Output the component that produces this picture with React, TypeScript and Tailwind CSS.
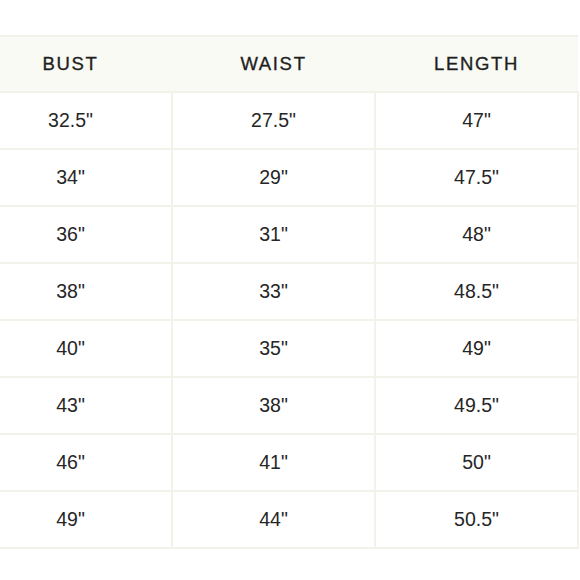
import React from "react";

const rows: [string, string, string][] = [
  ['32.5"', '27.5"', '47"'],
  ['34"', '29"', '47.5"'],
  ['36"', '31"', '48"'],
  ['38"', '33"', '48.5"'],
  ['40"', '35"', '49"'],
  ['43"', '38"', '49.5"'],
  ['46"', '41"', '50"'],
  ['49"', '44"', '50.5"'],
];

export default function App() {
  return (
    <div className="w-[580px] h-[580px] bg-white overflow-hidden pt-[35px] font-['Liberation_Sans',Arial,sans-serif] text-[#262626]">
      <table className="ml-[-32px] w-[611px] border-collapse table-fixed">
        <thead>
          <tr className="bg-[#fafaf4] h-[56px]">
            {["BUST", "WAIST", "LENGTH"].map((h) => (
              <th
                key={h}
                className="border-y-2 border-[#f3f2ea] text-[18.5px] font-normal tracking-[0.09em] text-center text-[#1f1f1f] [-webkit-text-stroke:0.35px_#1f1f1f]"
              >
                {h}
              </th>
            ))}
          </tr>
        </thead>
        <tbody>
          {rows.map((r, i) => (
            <tr key={i} className="h-[57px]">
              {r.map((c, j) => (
                <td
                  key={j}
                  className="border-2 border-[#f3f2ea] text-[19.5px] text-center"
                >
                  {c}
                </td>
              ))}
            </tr>
          ))}
        </tbody>
      </table>
    </div>
  );
}
